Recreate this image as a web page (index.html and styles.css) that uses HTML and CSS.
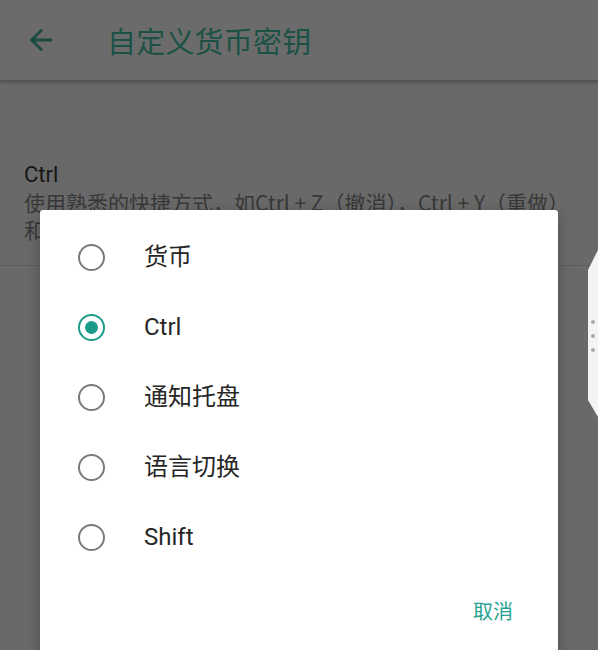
FILE: index.html
```html
<!DOCTYPE html>
<html lang="zh-CN">
<head>
<meta charset="utf-8">
<title>自定义货币密钥</title>
<link rel="stylesheet" href="styles.css">
</head>
<body>
<header class="appbar">
  <svg class="back" viewBox="0 0 24 24" aria-hidden="true"><path d="M20 11H7.83l5.59-5.59L12 4l-8 8 8 8 1.41-1.41L7.83 13H20v-2z"/></svg>
  <h1 class="title">自定义货币密钥</h1>
</header>
<section class="pref">
  <div class="pref-title">Ctrl</div>
  <div class="pref-summary">使用熟悉的快捷方式，如Ctrl + Z（撤消），Ctrl + Y（重做）<br>和Ctrl + A（全选）等组合键。</div>
</section>

<div class="handle"><span class="dot"></span><span class="dot"></span><span class="dot"></span></div>

<div class="dialog">
  <ul class="options">
    <li class="option"><span class="radio"></span><span class="label cjk">货币</span></li>
    <li class="option"><span class="radio checked"></span><span class="label">Ctrl</span></li>
    <li class="option"><span class="radio"></span><span class="label cjk">通知托盘</span></li>
    <li class="option"><span class="radio"></span><span class="label cjk">语言切换</span></li>
    <li class="option"><span class="radio"></span><span class="label">Shift</span></li>
  </ul>
  <div class="actions"><span class="btn">取消</span></div>
</div>
</body>
</html>
```
FILE: styles.css
```css
html, body {
  margin: 0;
  padding: 0;
}
body {
  width: 598px;
  height: 650px;
  overflow: hidden;
  position: relative;
  background: #696969;
  font-family: Roboto, "Noto Sans CJK SC", sans-serif;
}
.appbar {
  height: 80px;
  display: flex;
  align-items: center;
  padding-left: 24px;
  border-bottom: 2px solid #545454;
  box-shadow: 0 1px 3px rgba(0, 0, 0, 0.18);
  background: #6b6b6b;
}
.back {
  width: 34px;
  height: 34px;
  fill: #1b4b40;
  margin-right: 49px;
}
.title {
  margin: 0;
  font-family: "Noto Sans CJK SC", sans-serif;
  font-weight: 400;
  font-size: 29px;
  color: #1b5245;
  letter-spacing: 0.2px;
}
.pref {
  padding: 79px 24px 22px;
  border-bottom: 1px solid #5c5c5c;
}
.pref-title {
  font-size: 22px;
  line-height: 28px;
  color: #151515;
}
.pref-summary {
  font-family: "Noto Sans CJK SC", sans-serif;
  font-size: 21px;
  line-height: 27px;
  color: #383838;
  white-space: nowrap;
  overflow: hidden;
}
.handle {
  position: absolute;
  right: 0;
  top: 250px;
  width: 10px;
  height: 167px;
  background: #f4f4f4;
  clip-path: polygon(100% 0, 100% 100%, 0 150px, 0 20px);
  display: flex;
  flex-direction: column;
  align-items: center;
  padding-top: 70px;
  box-sizing: border-box;
  gap: 10px;
}
.dot {
  width: 4px;
  height: 4px;
  border-radius: 50%;
  background: #a8a8a8;
}
.dialog {
  position: absolute;
  left: 40px;
  top: 210px;
  width: 518px;
  height: 470px;
  background: #ffffff;
  border-radius: 3px;
  box-shadow: 0 4px 14px rgba(0, 0, 0, 0.25);
}
.options {
  list-style: none;
  margin: 0;
  padding: 12px 0 0;
}
.option {
  height: 70px;
  display: flex;
  align-items: center;
  padding-left: 38px;
  gap: 39px;
}
.radio {
  width: 27px;
  height: 27px;
  box-sizing: border-box;
  border: 2.5px solid #7a7a7a;
  border-radius: 50%;
  display: flex;
  align-items: center;
  justify-content: center;
  flex: none;
}
.radio.checked {
  border-color: #1b9c89;
}
.radio.checked::after {
  content: "";
  width: 13px;
  height: 13px;
  border-radius: 50%;
  background: #1b9c89;
}
.label {
  font-size: 24px;
  color: #262626;
}
.label.cjk {
  font-family: "Noto Sans CJK SC", sans-serif;
  line-height: 1.2;
  margin-top: -4px;
}
.actions {
  margin-top: 21px;
  display: flex;
  justify-content: flex-end;
  padding-right: 45px;
}
.btn {
  font-family: "Noto Sans CJK SC", sans-serif;
  font-size: 20px;
  line-height: 36px;
  height: 36px;
  color: #27a291;
}
```
